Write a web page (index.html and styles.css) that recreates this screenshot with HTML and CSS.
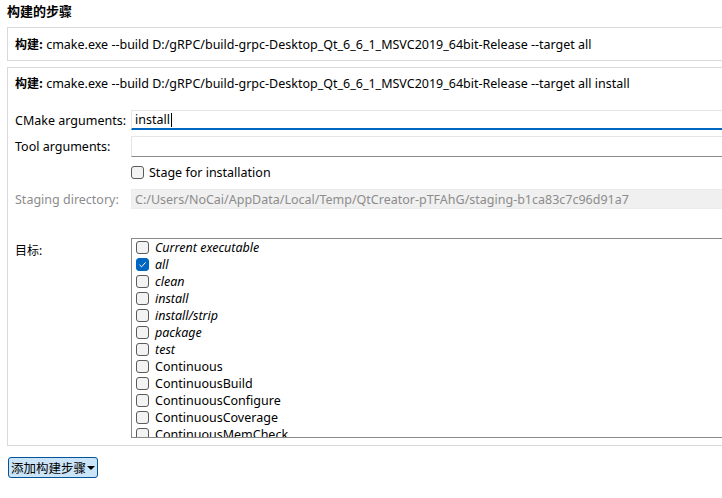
FILE: index.html
```html
<!DOCTYPE html>
<html>
<head>
<meta charset="utf-8">
<link rel="stylesheet" href="styles.css">
</head>
<body>
<div class="page">
  <div class="title">构建的步骤</div>
  <div class="step step-short">
    <span class="summary"><b>构建:</b> cmake.exe --build D:/gRPC/build-grpc-Desktop_Qt_6_6_1_MSVC2019_64bit-Release --target all</span>
  </div>
  <div class="step step-open">
    <div class="summary head"><b>构建:</b> cmake.exe --build D:/gRPC/build-grpc-Desktop_Qt_6_6_1_MSVC2019_64bit-Release --target all install</div>
    <div class="form">
      <label class="lbl r-cmake">CMake arguments:</label>
      <div class="field r-cmake focus">install<span class="caret"></span></div>
      <label class="lbl r-tool">Tool arguments:</label>
      <div class="field r-tool plain"></div>
      <div class="r-stage stage"><span class="cb"></span><span>Stage for installation</span></div>
      <label class="lbl r-dir disabled">Staging directory:</label>
      <div class="field r-dir disabled-field">C:/Users/NoCai/AppData/Local/Temp/QtCreator-pTFAhG/staging-b1ca83c7c96d91a7</div>
      <label class="lbl r-target target-lbl">目标:</label>
      <div class="list r-target">
        <div class="item it"><span class="cb"></span>Current executable</div>
        <div class="item it"><span class="cb on"><svg viewBox="0 0 13 13" width="13" height="13"><path d="M3.5 6.8 L5.6 8.8 L9.6 4.4" fill="none" stroke="#fff" stroke-width="1"/></svg></span>all</div>
        <div class="item it"><span class="cb"></span>clean</div>
        <div class="item it"><span class="cb"></span>install</div>
        <div class="item it"><span class="cb"></span>install/strip</div>
        <div class="item it"><span class="cb"></span>package</div>
        <div class="item it"><span class="cb"></span>test</div>
        <div class="item"><span class="cb"></span>Continuous</div>
        <div class="item"><span class="cb"></span>ContinuousBuild</div>
        <div class="item"><span class="cb"></span>ContinuousConfigure</div>
        <div class="item"><span class="cb"></span>ContinuousCoverage</div>
        <div class="item"><span class="cb"></span>ContinuousMemCheck</div>
      </div>
    </div>
  </div>
  <div class="actions">
    <button class="add">添加构建步骤<span class="arrow"></span></button>
  </div>
</div>
</body>
</html>
```
FILE: styles.css
```css
html, body {
  margin: 0;
  padding: 0;
  background: #ffffff;
  overflow: hidden;
}
body {
  width: 722px;
  height: 498px;
  font-family: "Noto Sans", "Noto Sans CJK SC", sans-serif;
  font-size: 12.5px;
  color: #000;
}
.page {
  padding-left: 7px;
}
.title {
  height: 27px;
  line-height: 21px;
  font-weight: bold;
  font-size: 13px;
  font-family: "Noto Sans CJK SC", sans-serif;
}
.step {
  border: 1px solid #d9d9d9;
  border-right: none;
  margin-right: -20px;
}
.step b {
  font-family: "Noto Sans CJK SC", sans-serif;
  font-weight: bold;
  font-size: 12px;
}
.step-short {
  height: 32px;
  display: flex;
  align-items: center;
  padding-left: 7px;
}
.step-open {
  margin-top: 6px;
  height: 377px;
  padding-left: 7px;
}
.head {
  height: 31px;
  line-height: 30px;
}
.form {
  display: grid;
  grid-template-columns: 116px 1fr;
  margin-top: 11px;
}
.lbl {
  grid-column: 1;
  display: flex;
  align-items: center;
}
.field {
  grid-column: 2;
  box-sizing: border-box;
  border: 1px solid #e5e5e5;
  border-right: none;
  padding-left: 3px;
  display: flex;
  align-items: center;
}
.r-cmake { height: 20px; }
.r-tool { height: 21px; margin-top: 6px; }
.r-stage { height: 18px; margin-top: 6px; }
.r-dir { height: 20px; margin-top: 8px; }
.r-target { margin-top: 29px; }
.focus {
  border-bottom: 2px solid #0067c0;
}
.plain {
  border-bottom: 1px solid #8a8a8a;
}
.caret {
  display: inline-block;
  width: 1px;
  height: 14px;
  background: #000;
  margin-left: 1px;
}
.stage {
  grid-column: 2;
  display: flex;
  align-items: center;
  gap: 5px;
}
.disabled { color: #8c8c8c; }
.disabled-field {
  background: #f0f0f0;
  color: #8c8c8c;
  border-color: #ececec;
}
.target-lbl {
  align-items: flex-start;
  padding-top: 3px;
  font-size: 12px;
}
.list {
  grid-column: 2;
  box-sizing: border-box;
  height: 200px;
  border: 1px solid #8a8a8a;
  border-right: none;
  overflow: hidden;
}
.item {
  height: 17px;
  flex: none;
  display: flex;
  align-items: center;
  gap: 6px;
  padding-left: 4px;
  white-space: nowrap;
}
.it { font-style: italic; }
.cb {
  box-sizing: border-box;
  width: 13px;
  height: 13px;
  border: 1px solid #5a5a5a;
  border-radius: 3px;
  background: #f3f3f3;
  flex: none;
  display: inline-flex;
}
.cb.on {
  background: #0067c0;
  border-color: #0067c0;
}
.cb.on svg { margin: -1px; }
.actions {
  padding-top: 11px;
}
.add {
  box-sizing: border-box;
  height: 21px;
  width: 90px;
  margin-left: 1px;
  padding: 0 0 0 2px;
  display: flex;
  align-items: center;
  font-family: "Noto Sans CJK SC", sans-serif;
  font-size: 12.5px;
  color: #000;
  background: #cce4f7;
  border: 1px solid #005499;
  border-radius: 3px;
}
.arrow {
  width: 0;
  height: 0;
  border-left: 4px solid transparent;
  border-right: 4px solid transparent;
  border-top: 4px solid #000;
  margin-left: 1px;
}
```
